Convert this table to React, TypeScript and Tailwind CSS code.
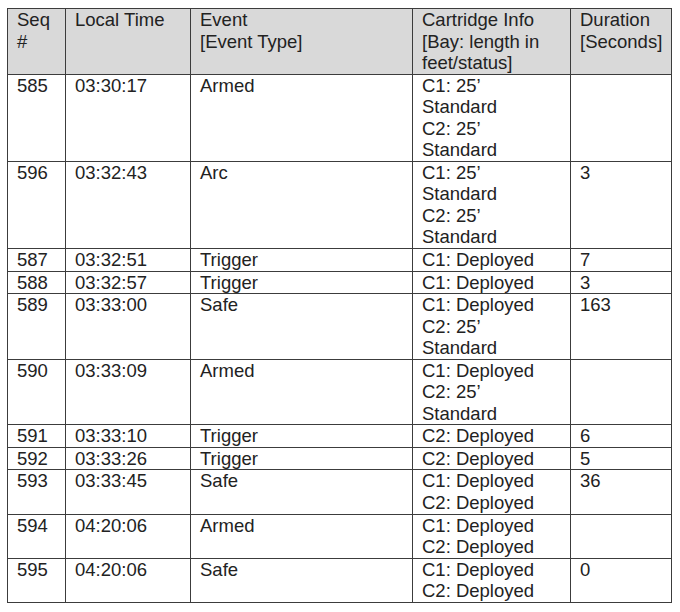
type Row = {
  seq: string;
  time: string;
  event: string;
  info: string[];
  dur: string;
};

const rows: Row[] = [
  { seq: "585", time: "03:30:17", event: "Armed", info: ["C1: 25’", "Standard", "C2: 25’", "Standard"], dur: "" },
  { seq: "596", time: "03:32:43", event: "Arc", info: ["C1: 25’", "Standard", "C2: 25’", "Standard"], dur: "3" },
  { seq: "587", time: "03:32:51", event: "Trigger", info: ["C1: Deployed"], dur: "7" },
  { seq: "588", time: "03:32:57", event: "Trigger", info: ["C1: Deployed"], dur: "3" },
  { seq: "589", time: "03:33:00", event: "Safe", info: ["C1: Deployed", "C2: 25’", "Standard"], dur: "163" },
  { seq: "590", time: "03:33:09", event: "Armed", info: ["C1: Deployed", "C2: 25’", "Standard"], dur: "" },
  { seq: "591", time: "03:33:10", event: "Trigger", info: ["C2: Deployed"], dur: "6" },
  { seq: "592", time: "03:33:26", event: "Trigger", info: ["C2: Deployed"], dur: "5" },
  { seq: "593", time: "03:33:45", event: "Safe", info: ["C1: Deployed", "C2: Deployed"], dur: "36" },
  { seq: "594", time: "04:20:06", event: "Armed", info: ["C1: Deployed", "C2: Deployed"], dur: "" },
  { seq: "595", time: "04:20:06", event: "Safe", info: ["C1: Deployed", "C2: Deployed"], dur: "0" },
];

const cell = "border border-[#3c3c3c] align-top pl-[9px] pr-[4px] py-0 text-left font-normal";

function Lines({ items }: { items: string[] }) {
  return (
    <>
      {items.map((t, i) => (
        <div key={i}>{t}</div>
      ))}
    </>
  );
}

export default function App() {
  return (
    <div
      className="min-h-[612px] w-[680px] bg-white pl-[7px] pt-[8px] text-[18.5px] leading-[21.55px] text-[#222]"
      style={{ fontFamily: '"Liberation Sans", Arial, sans-serif' }}
    >
      <table className="w-[664px] table-fixed border-collapse">
        <colgroup>
          <col className="w-[58px]" />
          <col className="w-[125px]" />
          <col className="w-[222px]" />
          <col className="w-[158px]" />
          <col className="w-[101px]" />
        </colgroup>
        <thead>
          <tr className="bg-[#d9d9d9]">
            <th className={cell}>
              <Lines items={["Seq", "#"]} />
            </th>
            <th className={cell}>Local Time</th>
            <th className={cell}>
              <Lines items={["Event", "[Event Type]"]} />
            </th>
            <th className={cell}>
              <Lines items={["Cartridge Info", "[Bay: length in", "feet/status]"]} />
            </th>
            <th className={cell}>
              <Lines items={["Duration", "[Seconds]"]} />
            </th>
          </tr>
        </thead>
        <tbody>
          {rows.map((r) => (
            <tr key={r.seq}>
              <td className={cell}>{r.seq}</td>
              <td className={cell}>{r.time}</td>
              <td className={cell}>{r.event}</td>
              <td className={cell}>
                <Lines items={r.info} />
              </td>
              <td className={cell}>{r.dur}</td>
            </tr>
          ))}
        </tbody>
      </table>
    </div>
  );
}
